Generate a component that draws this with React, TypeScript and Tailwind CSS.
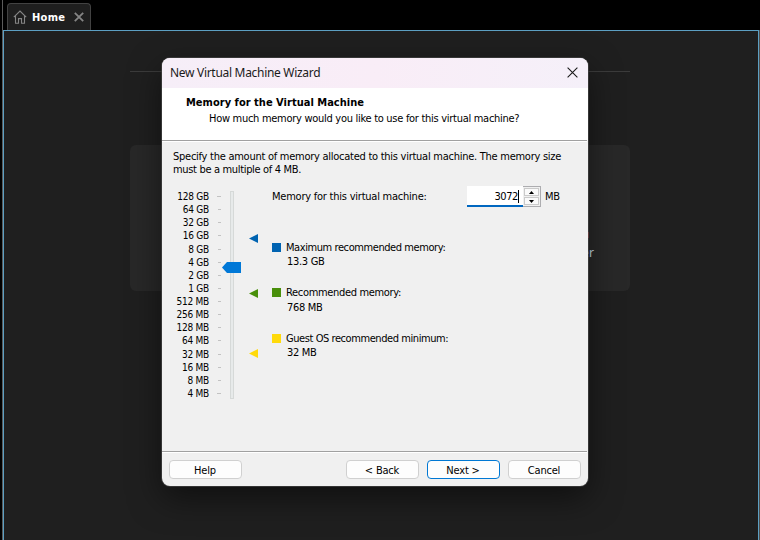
import React from "react";

const rows = [
  ["128 GB", "h-[13px]"], ["64 GB", "h-[13px]"], ["32 GB", "h-[13px]"], ["16 GB", "h-[14px]"],
  ["8 GB", "h-[13px]"], ["4 GB", "h-[13px]"], ["2 GB", "h-[13px]"], ["1 GB", "h-[13px]"],
  ["512 MB", "h-[13px]"], ["256 MB", "h-[13px]"], ["128 MB", "h-[13px]"], ["64 MB", "h-[14px]"],
  ["32 MB", "h-[13px]"], ["16 MB", "h-[13px]"], ["8 MB", "h-[13px]"], ["4 MB", "h-[13px]"],
];

function Scale() {
  return (
    <div className="mr-px flex w-[59px] shrink-0 flex-col pt-[11px] text-[10px] leading-[13px]">
      {rows.map(([label, height], i) => (
        <div key={label} className={`flex justify-end ${height}`}>
          <span className="whitespace-nowrap tracking-[-0.25px]">{label}</span>
          <span
            className={`mt-[6px] h-px bg-[#c2c2c2] ${
              i === 0 || i === 15 ? "ml-[8px] w-[4px]" : "ml-[9px] w-[3px]"
            }`}
          />
        </div>
      ))}
    </div>
  );
}

function Marker({ color, className }: { color: string; className: string }) {
  return (
    <svg className={`block h-[9px] w-[9px] ${className}`} viewBox="0 0 9 9">
      <path d="M0 4.5 9 0v9z" fill={color} />
    </svg>
  );
}

function Legend({ square, title, value, className, track, gap }: Record<string, string>) {
  return (
    <div className={`flex ${className}`}>
      <span className={`mt-[2px] h-[9px] w-[9px] shrink-0 ${square}`} />
      <div className="ml-[5px] whitespace-nowrap leading-[13px]">
        <div className={track}>{title}</div>
        <div className={`pl-px tracking-[-0.3px] ${gap}`}>{value}</div>
      </div>
    </div>
  );
}

function Button({ label, className }: { label: string; className: string }) {
  return (
    <button className={`flex h-[19px] w-[73px] items-center justify-center rounded-[4px] border bg-[#fdfdfd] pr-px pt-px leading-[13px] tracking-[-0.2px] ${className}`}>
      {label}
    </button>
  );
}

export default function App() {
  return (
    <div className="relative flex h-[540px] w-[760px] flex-col overflow-hidden bg-black font-['DejaVu_Sans_Condensed','Noto_Sans',sans-serif] text-[11px] text-black">
      <div className="ml-[2px] flex h-[30px] border-l border-[#5b5b5b] pl-[4px] pt-[3px]">
        <div className="flex h-[27px] w-[84px] items-center rounded-t-[4px] border border-b-0 border-[#424242] bg-[#1f1f1f] pl-[5px]">
          <svg className="h-[14px] w-[14px]" viewBox="0 0 14 14" fill="none" stroke="#858585" strokeWidth="1.1">
            <path d="M.8 7.2 7 1l6.2 6.2M2.5 5.8v7.4h3V8.6h3v4.6h3V5.8" />
          </svg>
          <span className="ml-[5px] w-[34px] whitespace-nowrap pt-px font-bold leading-[14px] tracking-[0.3px] text-white">Home</span>
          <svg className="ml-[8px] h-[10px] w-[10px]" viewBox="0 0 10 10" stroke="#858585" strokeWidth="1.8">
            <path d="m.8.8 8.4 8.4M9.2.8.8 9.2" />
          </svg>
        </div>
      </div>
      <div className="ml-[2px] flex flex-1 border-x border-l-[#5b5b5b] border-r-[#4d4d4d]">
        <div className="flex flex-1 flex-col border border-b-0 border-[#5c9fc2] bg-[#1f1f1f] pl-[126px] pt-[40px]">
          <div className="h-px w-[500px] bg-[#3b3b3b]" />
          <div className="mt-[73px] flex h-[146px] w-[500px] flex-col items-end rounded-[6px] bg-[#282828] pr-[36px] pt-[87px] font-['Noto_Sans',sans-serif] text-[12px] leading-[16px] text-[#c6dbe5]">
            <div className="mr-[5px] h-[6px] w-[20px] bg-[#c0363b]" />
            <span className="mt-[7px]">Connect to a Remote Server</span>
          </div>
        </div>
      </div>

      <div className="absolute left-[162px] top-[58px] flex h-[428px] w-[426px] flex-col overflow-hidden rounded-[8px] bg-[#f0f0f0] shadow-[0_0_0_1px_rgba(70,70,70,0.65),0_12px_32px_rgba(0,0,0,0.5)]">
        <div className="flex h-[30px] shrink-0 items-center justify-between bg-linear-to-r from-[#f6eef8] via-[#f9edf7] to-[#f5f0f9] pl-[8px] pr-[10px] font-['Noto_Sans',sans-serif] text-[12px] text-[#1b1b1b]">
          <span className="tracking-[-0.3px]">New Virtual Machine Wizard</span>
          <svg className="mb-[2px] h-[11px] w-[11px]" viewBox="0 0 11 11" stroke="#1b1b1b" strokeWidth="1.1">
            <path d="m.6.6 9.8 9.8M10.4.6.6 10.4" />
          </svg>
        </div>
        <div className="h-[52px] shrink-0 bg-white pl-[24px] pt-[8px] leading-[14px]">
          <div className="font-bold tracking-[0.02px]">Memory for the Virtual Machine</div>
          <div className="mt-[2px] pl-[23px] tracking-[-0.285px]">How much memory would you like to use for this virtual machine?</div>
        </div>
        <div className="mr-px h-[2px] shrink-0 border-b border-white bg-[#a0a0a0]" />
        <div className="h-[309px] shrink-0">
          <div className="whitespace-nowrap pl-[11px] pt-[8px] leading-[13px]">
            <div className="tracking-[-0.26px]">Specify the amount of memory allocated to this virtual machine. The memory size</div>
            <div className="tracking-[-0.33px]">must be a multiple of 4 MB.</div>
          </div>
          <div className="mt-[3px] flex">
            <Scale />
            <div className="mt-[12px] w-[20px] shrink-0">
              <div className="ml-[8px] h-[208px] w-[4px] border border-[#d6d9d8] bg-[#e7eaea]" />
              <svg className="-mt-[137px] block h-[11px] w-[19px]" viewBox="0 0 19 11">
                <path d="M0 5.5 5 0h14v11H5z" fill="#0078d7" />
              </svg>
            </div>
            <div className="ml-[7px] w-[9px] shrink-0">
              <Marker color="#0063b1" className="mt-[55px]" />
              <Marker color="#498f0b" className="mt-[46px]" />
              <Marker color="#ffda0b" className="mt-[51px]" />
            </div>
            <div className="ml-[14px] pt-[7px]">
              <div className="flex h-[21px]">
                <span className="w-[195px] whitespace-nowrap pt-[4px] leading-[13px] tracking-[-0.23px]">Memory for this virtual machine:</span>
                <div className="flex h-[21px] w-[56px] items-center justify-end border-b-2 border-[#0067c0] bg-white pr-[4px] pt-px leading-[13px] tracking-[-0.4px]">
                  3072<span className="h-[13px] w-px bg-black" />
                </div>
                <div className="flex h-[21px] w-[18px] flex-col border border-l-0 border-[#adadb0] bg-[#f0f0f0] p-px">
                  {["M2 0 4.5 3H-.5z", "M-.5 0h5L2 3z"].map((d) => (
                    <div key={d} className="flex flex-1 items-center justify-center border border-[#cacaca] bg-[#fafafa] not-first:mt-px">
                      <svg className="h-[3px] w-[5px]" viewBox="-.5 0 5 3"><path d={d} /></svg>
                    </div>
                  ))}
                </div>
                <span className="ml-[4px] pt-[4px] leading-[13px] tracking-[-0.2px]">MB</span>
              </div>
              <Legend square="bg-[#0063b1]" title="Maximum recommended memory:" value="13.3 GB" className="mt-[34px]" track="tracking-[-0.42px]" gap="mt-[1px]" />
              <Legend square="bg-[#498f0b]" title="Recommended memory:" value="768 MB" className="mt-[18px]" track="tracking-[-0.33px]" gap="mt-[2px]" />
              <Legend square="bg-[#ffda0b]" title="Guest OS recommended minimum:" value="32 MB" className="mt-[18px]" track="tracking-[-0.43px]" gap="mt-[1px]" />
            </div>
          </div>
        </div>
        <div className="mr-px h-[2px] shrink-0 border-b border-white bg-[#a0a0a0]" />
        <div className="flex flex-1 px-[7px] pt-[7px]">
          <Button label="Help" className="border-[#d0d0d0]" />
          <Button label="< Back" className="ml-auto border-[#d0d0d0]" />
          <Button label="Next >" className="ml-[8px] border-[#0078d4]" />
          <Button label="Cancel" className="ml-[8px] border-[#d0d0d0]" />
        </div>
      </div>
    </div>
  );
}
